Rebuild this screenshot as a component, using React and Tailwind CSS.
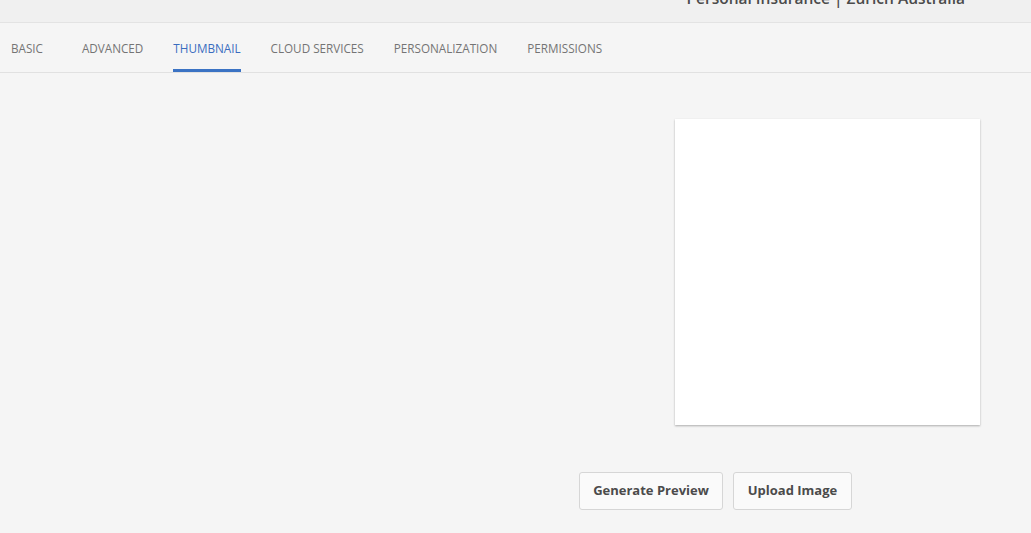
import React from 'react';

const tabs = ['BASIC', 'ADVANCED', 'THUMBNAIL', 'CLOUD SERVICES', 'PERSONALIZATION', 'PERMISSIONS'];

const App = () => {
  const active = 'THUMBNAIL';

  return (
    <div className="w-[1031px] h-[533px] overflow-hidden bg-[#f5f5f5] font-['Open_Sans',sans-serif]">
      {/* header strip, title is scrolled mostly out of view */}
      <div className="h-[23px] overflow-hidden bg-[#f0f0f0] border-b border-[#e3e3e3] flex justify-end pr-[66px]">
        <div className="-mt-[9px] text-[15.5px] leading-none font-semibold text-[#4b4b4b] whitespace-nowrap">
          Personal Insurance | Zurich Australia
        </div>
      </div>

      <div className="h-[50px] border-b border-[#e1e1e1] flex items-stretch pl-[11px]">
        {tabs.map((t, i) => (
          <div
            key={t}
            className={`relative flex items-center pt-[2px] text-[11.7px] ${i === 0 ? 'mr-[39px]' : 'mr-[30px]'} ${
              t === active ? 'text-[#3a6dbf]' : 'text-[#747474]'
            }`}
          >
            {t}
            {t === active && <div className="absolute left-0 right-0 bottom-0 h-[3px] bg-[#3b73c4]" />}
          </div>
        ))}
      </div>

      <div className="flex flex-col">
        <div className="self-end mr-[51px] mt-[46px] w-[305px] h-[306px] bg-white shadow-[0_1px_2px_rgba(0,0,0,0.3)]" />
        <div className="flex gap-[10px] ml-[579px] mt-[47px]">
          <button className="h-[38px] w-[144px] bg-[#fafafa] border border-[#d6d6d6] rounded-[3px] text-[13px] font-bold text-[#4b4b4b]">
            Generate Preview
          </button>
          <button className="h-[38px] w-[119px] bg-[#fafafa] border border-[#d6d6d6] rounded-[3px] text-[13px] font-bold text-[#4b4b4b]">
            Upload Image
          </button>
        </div>
      </div>
    </div>
  );
};

export default App;
